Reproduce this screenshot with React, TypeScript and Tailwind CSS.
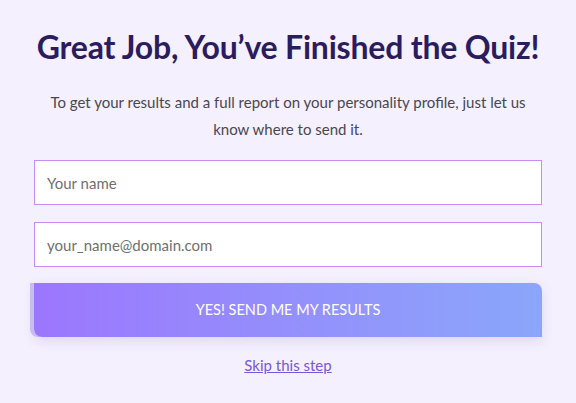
import React from "react";

export default function App() {
  return (
    <div
      className="w-[576px] h-[403px] bg-[#f4f0fe] flex flex-col items-center"
      style={{ fontFamily: "Lato, 'Noto Sans', sans-serif" }}
    >
      <h1 className="mt-[27px] text-[32px] leading-[40px] font-bold text-[#2b1c5e] tracking-[-0.2px] whitespace-nowrap">
        Great Job, You’ve Finished the Quiz!
      </h1>
      <p className="mt-[22px] w-[490px] text-center text-[15px] leading-[27px] text-[#4a4750]">
        To get your results and a full report on your personality profile, just let us know where to send it.
      </p>
      <div className="mt-[17px] w-[508px] flex flex-col">
        <input
          className="h-[45px] w-full bg-white border border-[#c98cf5] px-[12px] text-[15px] text-[#555] placeholder:text-[#707070] outline-none"
          placeholder="Your name"
        />
        <input
          className="mt-[17px] h-[45px] w-full bg-white border border-[#c98cf5] px-[12px] text-[15px] text-[#555] placeholder:text-[#707070] outline-none"
          placeholder="your_name@domain.com"
        />
        <button className="mt-[16px] h-[54px] w-full rounded-tr-[8px] rounded-bl-[8px] bg-gradient-to-r from-[#9b76fd] to-[#8aa6fa] text-white text-[14.5px] shadow-[-4px_0_0_#c8bdf0,0_4px_12px_rgba(120,100,180,0.18)]">
          YES! SEND ME MY RESULTS
        </button>
      </div>
      <a href="#" className="mt-[17px] text-[15px] text-[#7658d8] underline">
        Skip this step
      </a>
    </div>
  );
}
